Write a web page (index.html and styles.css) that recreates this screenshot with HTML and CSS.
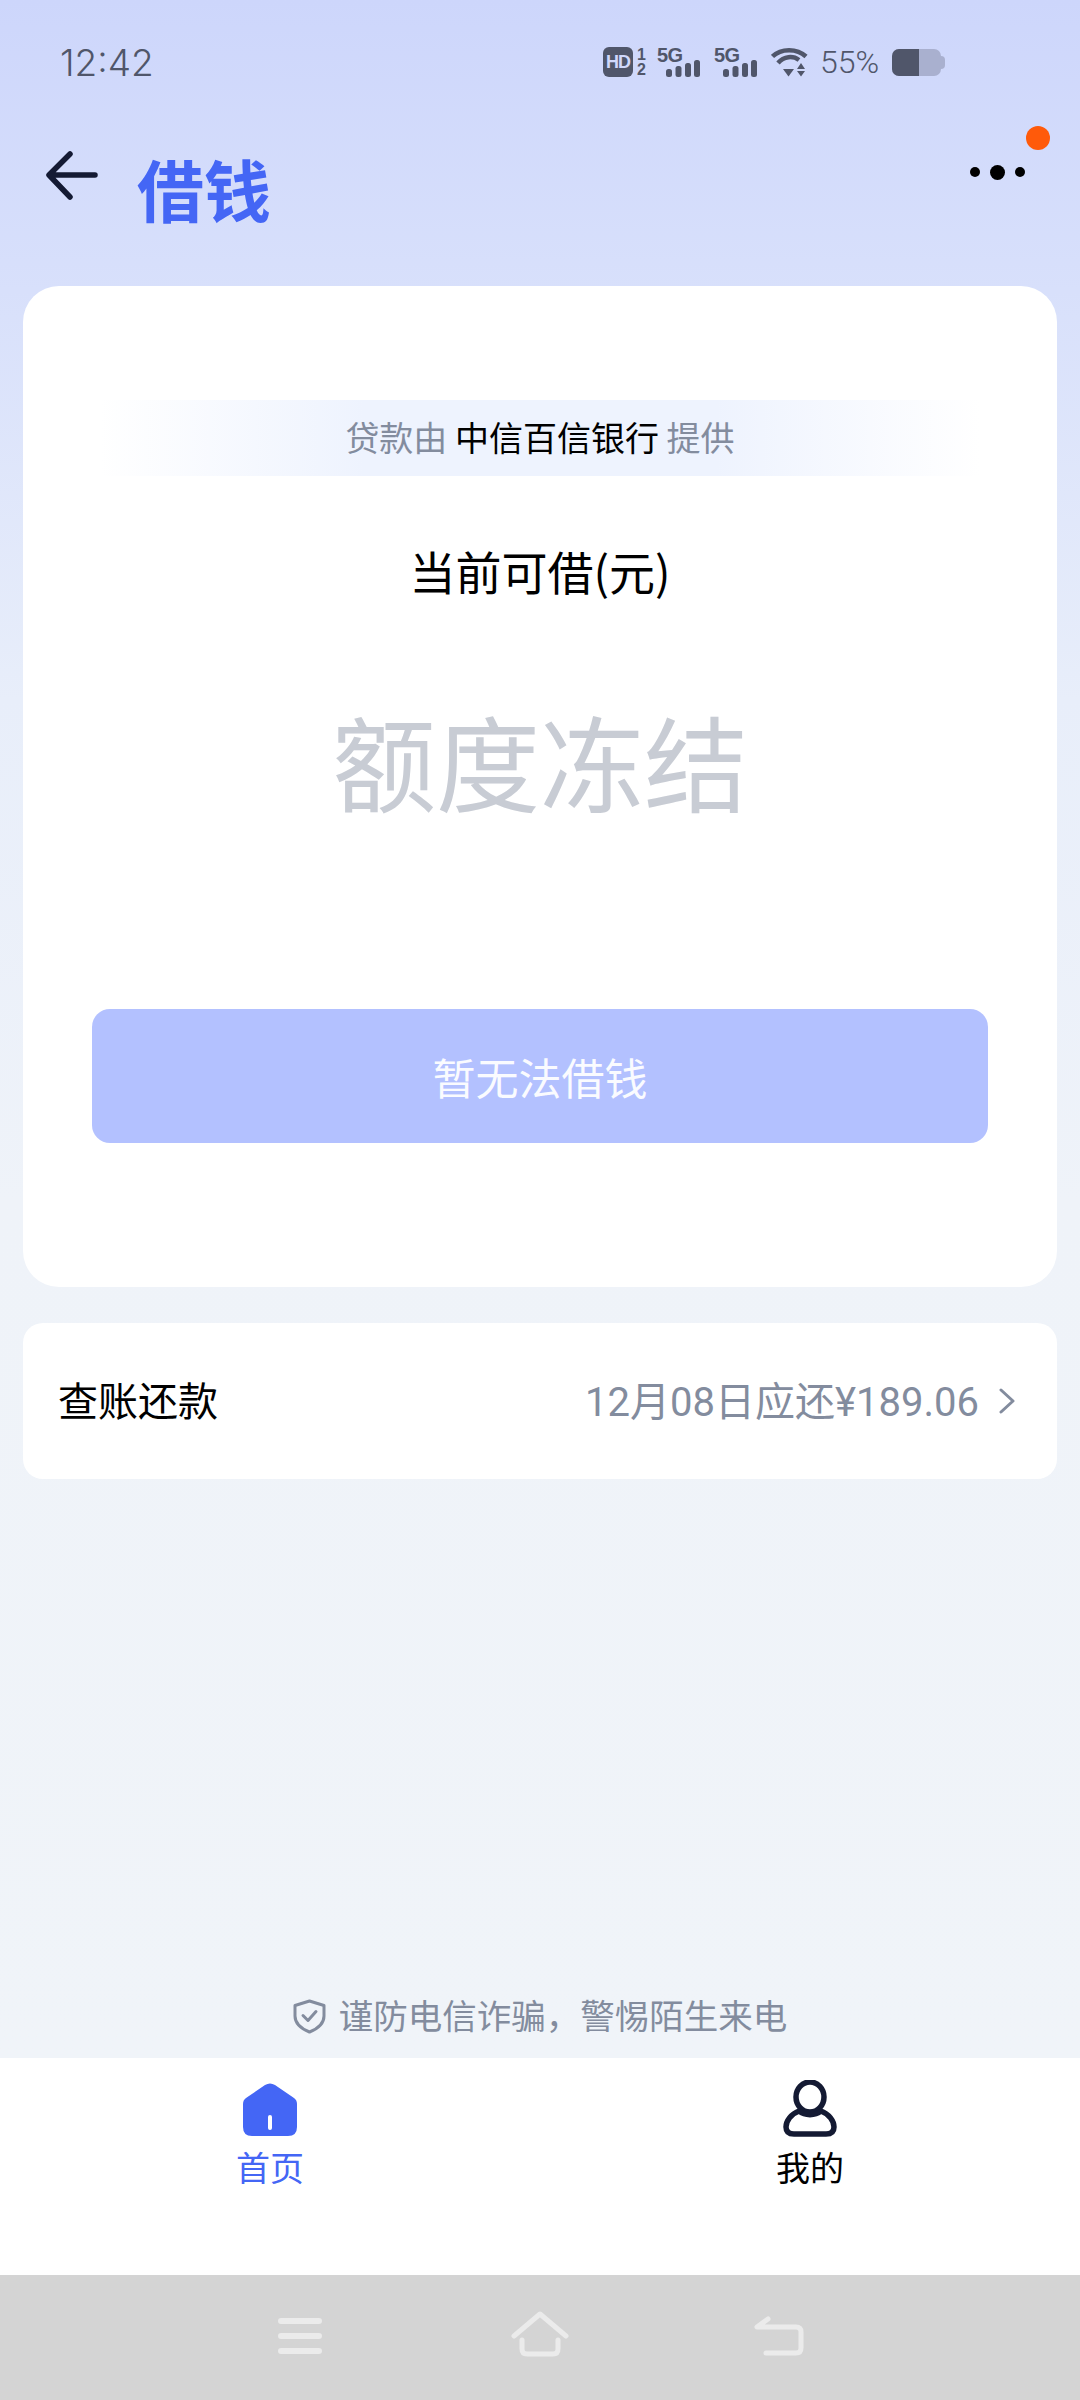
FILE: index.html
```html
<!DOCTYPE html>
<html lang="zh-CN">
<head>
  <meta charset="UTF-8" />
  <meta name="viewport" content="width=device-width, initial-scale=1.0"/>
  <title>借钱</title>
  <link rel="stylesheet" href="styles.css">
</head>
<body>
  <div class="page">
    <div class="status">
      <span class="time">12:42</span>
      <div class="status-icons">
        <span class="hd">HD</span>
        <span class="sims"><span>1</span><span>2</span></span>
        <div class="signal">
          <span class="five-g">5G</span>
          <svg class="bars" width="34" height="17" viewBox="0 0 34 17"><rect x="0" y="9" width="6" height="8" rx="2.5"/><rect x="9.5" y="6" width="6" height="11" rx="2.5"/><rect x="19" y="3" width="6" height="14" rx="2.5"/><rect x="28" y="0" width="6" height="17" rx="2.5"/></svg>
        </div>
        <div class="signal">
          <span class="five-g">5G</span>
          <svg class="bars" width="34" height="17" viewBox="0 0 34 17"><rect x="0" y="9" width="6" height="8" rx="2.5"/><rect x="9.5" y="6" width="6" height="11" rx="2.5"/><rect x="19" y="3" width="6" height="14" rx="2.5"/><rect x="28" y="0" width="6" height="17" rx="2.5"/></svg>
        </div>
        <svg class="wifi" width="37" height="30" viewBox="0 0 37 30">
          <path d="M1.5 9.5 C10 1 26 1 35 9.5" fill="none" stroke="#50566a" stroke-width="4.5"/>
          <path d="M7 16 C13 9 22 8.5 28 13" fill="none" stroke="#50566a" stroke-width="4.5"/>
          <path d="M12 22 L23 22 L17.5 29.5 Z" fill="#50566a"/>
          <path d="M30 16 L34 22 H26 Z M26 24 H34 L30 29.5 Z" fill="#50566a"/>
        </svg>
        <span class="battery-pct">55%</span>
        <div class="battery"><div class="battery-fill"></div></div>
      </div>
    </div>

    <div class="header">
      <svg class="back" width="54" height="50" viewBox="0 0 54 50">
        <path d="M50 24 H5 M25 3 L4 24 L25 46" fill="none" stroke="#141a33" stroke-width="5.5" stroke-linecap="round" stroke-linejoin="round"/>
      </svg>
      <h1 class="title">借钱</h1>
      <div class="more">
        <span class="more-dot"></span>
        <span class="more-dot big"></span>
        <span class="more-dot"></span>
      </div>
      <span class="badge"></span>
    </div>

    <div class="card">
      <div class="lender">贷款由 <b>中信百信银行</b> 提供</div>
      <div class="label">当前可借(元)</div>
      <div class="amount">额度冻结</div>
      <button class="borrow" type="button">暂无法借钱</button>
    </div>

    <div class="repay">
      <span class="repay-name">查账还款</span>
      <span class="repay-info">12月08日应还¥189.06</span>
      <svg class="chevron" width="16" height="26" viewBox="0 0 16 26"><path d="M2 2 L14 13 L2 24" fill="none" stroke="#838c9e" stroke-width="3" stroke-linecap="round" stroke-linejoin="round"/></svg>
    </div>

    <div class="notice">
      <svg width="33" height="35" viewBox="0 0 33 35">
        <path d="M16.5 2 L31 6.5 V17 C31 25 24 30 16.5 33 C9 30 2 25 2 17 V6.5 Z" fill="none" stroke="#838c9e" stroke-width="3" stroke-linejoin="round"/>
        <path d="M10 16.5 L15 21.5 L23 12.5" fill="none" stroke="#838c9e" stroke-width="3" stroke-linecap="round" stroke-linejoin="round"/>
      </svg>
      <span>谨防电信诈骗，警惕陌生来电</span>
    </div>

    <div class="tabs">
      <div class="tab active">
        <svg width="54" height="58" viewBox="0 0 54 58">
          <path d="M22 5 Q27 2 32 5 L51 18 Q54 20 54 24 V47 Q54 56 45 56 H9 Q0 56 0 47 V24 Q0 20 3 18 Z" fill="#4466f5"/>
          <rect x="25" y="35" width="4" height="15" rx="2" fill="#fff"/>
        </svg>
        <span>首页</span>
      </div>
      <div class="tab">
        <svg width="54" height="58" viewBox="0 0 54 58">
          <ellipse cx="27" cy="17" rx="14" ry="15" fill="none" stroke="#141a33" stroke-width="5.5"/>
          <path d="M16 31 C8 34 3 41 3 47 C3 52 6 54 11 54 H43 C48 54 51 52 51 47 C51 41 46 34 38 31 C32 36 22 36 16 31 Z" fill="none" stroke="#141a33" stroke-width="5.5" stroke-linejoin="round"/>
        </svg>
        <span>我的</span>
      </div>
    </div>

    <div class="sysbar">
      <svg width="44" height="38" viewBox="0 0 44 38">
        <path d="M3 4 H41 M3 19 H41 M3 34 H41" stroke="#ebebeb" stroke-width="6" stroke-linecap="round"/>
      </svg>
      <svg class="sys-home" width="58" height="46" viewBox="0 0 58 46">
        <path d="M3 25 L29 3 L55 25" fill="none" stroke="#ebebeb" stroke-width="5" stroke-linecap="round" stroke-linejoin="round"/>
        <path d="M11 29 V38 Q11 43 16 43 H42 Q47 43 47 38 V29" fill="none" stroke="#ebebeb" stroke-width="5" stroke-linecap="round"/>
      </svg>
      <svg width="50" height="40" viewBox="0 0 50 40">
        <path d="M14 3 L3 11 H42 Q47 11 47 16 V32 Q47 37 42 37 H12" fill="none" stroke="#ebebeb" stroke-width="5" stroke-linecap="round" stroke-linejoin="round"/>
      </svg>
    </div>
  </div>
</body>
</html>
```

FILE: styles.css
```css
* {
  box-sizing: border-box;
}

body {
  margin: 0;
  font-family: "Noto Sans CJK SC", "Noto Sans", sans-serif;
  color: #000;
}

.page {
  width: 1080px;
  height: 2400px;
  display: flex;
  flex-direction: column;
  background: linear-gradient(180deg, #cdd6fb 0, #d8e0fb 290px, #e8eefa 700px, #eff3f9 1200px, #f0f4f9 2060px);
}

/* status bar */
.status {
  height: 124px;
  flex: none;
  display: flex;
  align-items: center;
  justify-content: space-between;
  padding: 0 135px 0 60px;
  color: #50566a;
}

.time {
  font-family: Inter, sans-serif;
  font-size: 37px;
  font-weight: 300;
}

.status-icons {
  display: flex;
  align-items: center;
}

.hd {
  width: 30px;
  height: 30px;
  border-radius: 6px;
  background: #50566a;
  color: #d0d8fb;
  font: 700 18px/30px "Liberation Sans", sans-serif;
  letter-spacing: -1px;
  text-align: center;
}

.sims {
  width: 7px;
  display: flex;
  flex-direction: column;
  margin-left: 4px;
  font: 700 16px/15px "Liberation Sans", sans-serif;
}

.signal {
  width: 43px;
  height: 30px;
  margin-left: 14px;
  position: relative;
}

.sims + .signal {
  margin-left: 13px;
}

.five-g {
  display: block;
  font: 700 20px/16px "Liberation Sans", sans-serif;
  letter-spacing: -0.5px;
}

.bars {
  position: absolute;
  right: 0;
  bottom: 0;
  fill: #50566a;
}

.wifi {
  margin-left: 14px;
}

.battery-pct {
  width: 60px;
  margin-left: 12px;
  font-family: Roboto, sans-serif;
  font-size: 32px;
  font-weight: 300;
  line-height: 30px;
}

.battery {
  width: 49px;
  height: 27px;
  margin: 0 4px 0 12px;
  position: relative;
  border-radius: 7px;
  background: #a9b0cf;
}

.battery::after {
  content: "";
  position: absolute;
  top: 7px;
  right: -4px;
  width: 4px;
  height: 13px;
  border-radius: 0 4px 4px 0;
  background: #a9b0cf;
}

.battery-fill {
  width: 27px;
  height: 100%;
  border-radius: 7px 0 0 7px;
  background: #50566a;
}

/* title row */
.header {
  height: 162px;
  flex: none;
  position: relative;
  display: flex;
  align-items: flex-start;
}

.back {
  margin: 27px 0 0 45px;
}

.title {
  margin: 19px 0 0 38px;
  font-size: 67px;
  line-height: 90px;
  font-weight: 700;
  color: #4466f5;
}

.more {
  display: flex;
  align-items: center;
  gap: 10px;
  margin: 38px 55px 0 auto;
  height: 20px;
}

.more-dot {
  width: 10px;
  height: 10px;
  border-radius: 50%;
  background: #000;
}

.more-dot.big {
  width: 15px;
  height: 15px;
}

.badge {
  position: absolute;
  top: 2px;
  right: 30px;
  width: 24px;
  height: 24px;
  border-radius: 50%;
  background: #ff5a0a;
}

/* main card */
.card {
  height: 1001px;
  flex: none;
  margin: 0 23px;
  padding-top: 114px;
  display: flex;
  flex-direction: column;
  align-items: center;
  background: #fff;
  border-radius: 36px;
}

.lender {
  width: 880px;
  height: 76px;
  font-size: 34px;
  line-height: 74px;
  text-align: center;
  color: #838c9e;
  background: linear-gradient(90deg, rgba(238, 243, 254, 0), #eef3fe 30%, #eef3fe 70%, rgba(238, 243, 254, 0));
}

.lender b {
  font-weight: 400;
  color: #000;
}

.label {
  margin-top: 59px;
  font-size: 46px;
  line-height: 70px;
}

.amount {
  margin-top: 80px;
  font-size: 104px;
  line-height: 150px;
  color: #c8ccd4;
}

.borrow {
  width: 896px;
  height: 134px;
  margin-top: 174px;
  border: none;
  border-radius: 18px;
  background: #b3c1ff;
  color: #fafbff;
  font-family: inherit;
  font-size: 43px;
}

/* repayment row */
.repay {
  height: 156px;
  flex: none;
  margin: 36px 23px 0;
  padding: 0 42px 4px 35px;
  display: flex;
  align-items: center;
  background: #fff;
  border-radius: 20px;
}

.repay-name {
  font-size: 40px;
}

.repay-info {
  margin-left: auto;
  font-family: Roboto, "Noto Sans CJK SC", sans-serif;
  font-size: 40px;
  color: #838c9e;
}

.chevron {
  margin: 4px 0 0 20px;
}

/* bottom */
.notice {
  margin-top: auto;
  height: 79px;
  flex: none;
  padding-top: 10px;
  display: flex;
  align-items: flex-start;
  justify-content: center;
  gap: 13px;
  font-size: 34.5px;
  line-height: 50px;
  color: #838c9e;
}

.notice svg {
  margin-top: 10px;
}

.tabs {
  height: 217px;
  flex: none;
  display: grid;
  grid-template-columns: 1fr 1fr;
  padding-top: 22px;
  background: #fff;
}

.tab {
  display: flex;
  flex-direction: column;
  align-items: center;
  gap: 4px;
  font-size: 34px;
  line-height: 50px;
}

.tab.active {
  color: #4466f5;
}

.sysbar {
  height: 125px;
  flex: none;
  display: flex;
  align-items: center;
  justify-content: space-between;
  padding: 0 276px 4px 278px;
  background: #d4d4d4;
}

.sys-home {
  margin: 0 0 4px 4px;
}
```
